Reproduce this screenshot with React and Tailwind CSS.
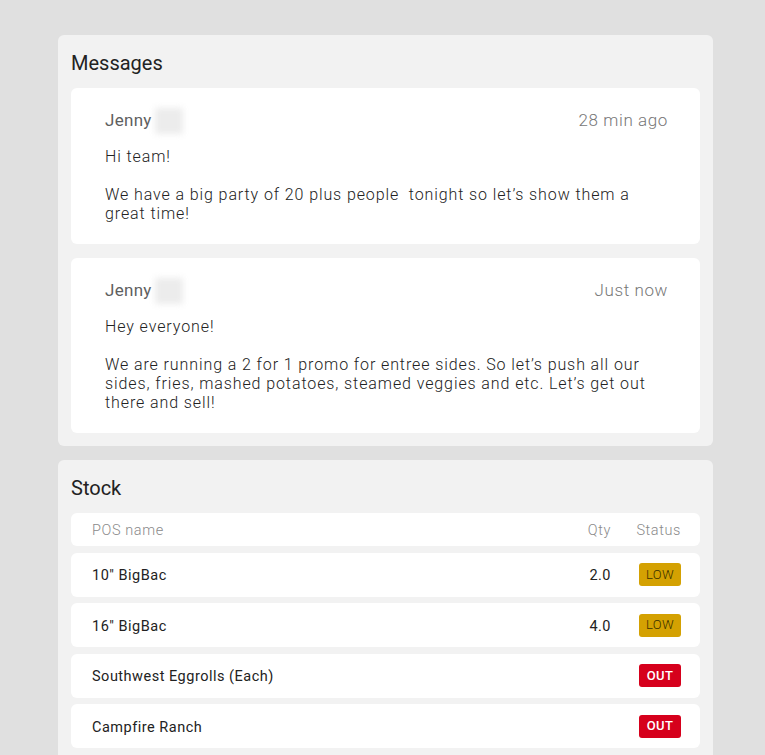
import React from 'react';

const messages = [
  {
    id: 1,
    author: 'Jenny',
    time: '28 min ago',
    body: "Hi team!\n\nWe have a big party of 20 plus people  tonight so let\u2019s show them a great time!",
  },
  {
    id: 2,
    author: 'Jenny',
    time: 'Just now',
    body: "Hey everyone!\n\nWe are running a 2 for 1 promo for entree sides. So let\u2019s push all our sides, fries, mashed potatoes, steamed veggies and etc. Let\u2019s get out there and sell!",
  },
];

const stock = [
  { name: '10" BigBac', qty: '2.0', status: 'LOW' },
  { name: '16" BigBac', qty: '4.0', status: 'LOW' },
  { name: 'Southwest Eggrolls (Each)', qty: '', status: 'OUT' },
  { name: 'Campfire Ranch', qty: '', status: 'OUT' },
];

const StatusBadge = ({ status }) => {
  const isLow = status === 'LOW';
  return (
    <span
      className={`inline-flex items-center justify-center w-[42px] h-[23px] rounded-[3px] text-[13px] tracking-[0.3px] ${
        isLow ? 'bg-[#d4a102] text-[#3a3000] font-light' : 'bg-[#d6001c] text-white font-medium'
      }`}
    >
      {status}
    </span>
  );
};

const Panel = ({ title, children }) => (
  <div className="bg-[#f2f2f2] rounded-[6px] px-[13px] pt-[14px] pb-[13px]">
    <h2 className="text-[20px] leading-[28px] text-[#222] mb-[11px]">{title}</h2>
    {children}
  </div>
);

export default function App() {
  return (
    <div
      className="min-h-[755px] bg-[#e0e0e0] pt-[35px] pl-[58px] overflow-hidden"
      style={{ fontFamily: 'Roboto, "Liberation Sans", sans-serif' }}
    >
      <div className="w-[655px] flex flex-col gap-[14px]">
        {/* Messages */}
        <Panel title="Messages">
          <div className="flex flex-col gap-[14px]">
            {messages.map(msg => (
              <div key={msg.id} className="bg-white rounded-[6px] pl-[34px] pr-[32px] pt-[19px] pb-[21px]">
                <div className="flex justify-between items-center h-[28px]">
                  <div className="flex items-center">
                    <span className="text-[17px] text-[#5f5f5f] tracking-[0.3px]">{msg.author}</span>
                    <span className="inline-block ml-[3px] w-[28px] h-[26px] bg-[#ececec] blur-[3px]" />
                  </div>
                  <span className="text-[17px] text-[#777] font-light tracking-[0.6px]">{msg.time}</span>
                </div>
                <p className="mt-[12px] text-[16px] leading-[19px] text-[#222] font-light tracking-[0.9px] whitespace-pre-wrap pr-[20px]">
                  {msg.body}
                </p>
              </div>
            ))}
          </div>
        </Panel>

        {/* Stock */}
        <Panel title="Stock">
          <div className="flex flex-col gap-[6.5px]">
            <div className="bg-white rounded-[6px] h-[33px] flex items-center pl-[21px] pr-[19px] pt-[3px] text-[14.5px] text-[#8a8a8a] font-light tracking-[0.6px]">
              <span className="flex-1">POS name</span>
              <span className="w-[40px] text-right">Qty</span>
              <span className="ml-[24px] w-[46px] text-right">Status</span>
            </div>
            {stock.map(item => (
              <div
                key={item.name}
                className="bg-white rounded-[6px] h-[44px] flex items-center pl-[21px] pr-[19px] text-[14.5px] text-[#222] tracking-[0.5px]"
              >
                <span className="flex-1 pt-[3px]">{item.name}</span>
                <span className="w-[40px] text-right pt-[3px]">{item.qty}</span>
                <span className="ml-[24px] w-[46px] flex justify-end">
                  <StatusBadge status={item.status} />
                </span>
              </div>
            ))}
          </div>
        </Panel>
      </div>
    </div>
  );
}
